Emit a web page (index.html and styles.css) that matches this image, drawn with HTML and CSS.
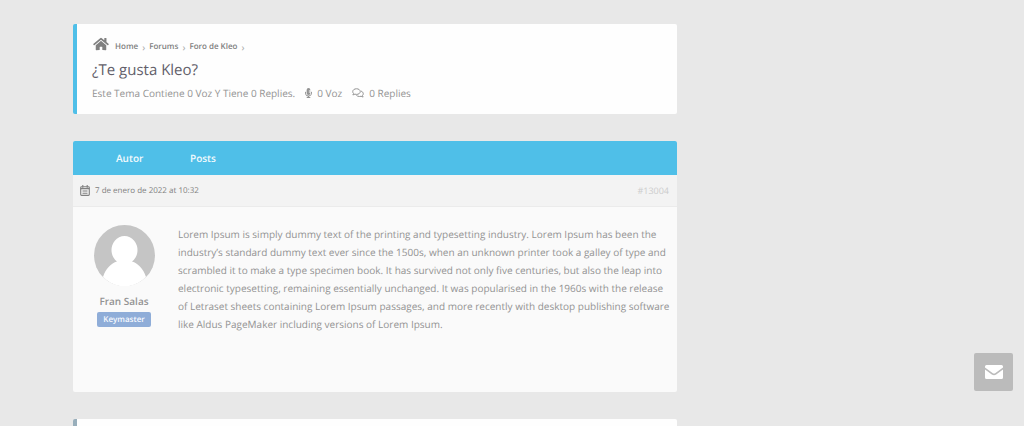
FILE: index.html
```html
<!DOCTYPE html>
<html lang="es">
<head>
<meta charset="utf-8">
<meta name="viewport" content="width=device-width, initial-scale=1">
<title>¿Te gusta Kleo?</title>
<link rel="stylesheet" href="styles.css">
</head>
<body>
<div class="page">
  <main class="content">
    <header class="card topic-header">
      <nav class="breadcrumb" aria-label="Breadcrumb">
        <svg class="home-icon" viewBox="0 0 576 512" aria-hidden="true"><path d="M280.400 148.300L96 300.100V464a16 16 0 0 0 16 16l112-.3a16 16 0 0 0 16-16V368a16 16 0 0 1 16-16h64a16 16 0 0 1 16 16v95.600a16 16 0 0 0 16 16.100L464 480a16 16 0 0 0 16-16V300L295.700 148.300a12.200 12.200 0 0 0-15.300 0zM571.600 251.500L488 182.600V44a12 12 0 0 0-12-12h-56a12 12 0 0 0-12 12v72.600L318.500 43a48 48 0 0 0-61 0L4.300 251.500a12 12 0 0 0-1.600 16.900l25.500 31a12 12 0 0 0 16.900 1.600l235.200-193.700a12.200 12.200 0 0 1 15.300 0L530.900 301a12 12 0 0 0 16.900-1.600l25.500-31a12 12 0 0 0-1.700-16.900z"/></svg>
        <a href="#">Home</a><span class="sep">›</span>
        <a href="#">Forums</a><span class="sep">›</span>
        <a href="#">Foro de Kleo</a><span class="sep">›</span>
      </nav>
      <h1 class="title">¿Te gusta Kleo?</h1>
      <p class="meta">
        <span>Este Tema Contiene 0 Voz Y Tiene 0 Replies.</span>
        <span class="stat">
          <svg class="mic-icon" viewBox="0 0 352 512" aria-hidden="true"><path d="M176 352a96 96 0 0 0 96-96h-80v-32h80v-32h-80v-32h80v-32h-80V96h80a96 96 0 0 0-192 0v160a96 96 0 0 0 96 96zM336 192h-16a16 16 0 0 0-16 16v48a128 128 0 0 1-256 0v-48a16 16 0 0 0-16-16H16a16 16 0 0 0-16 16v42c0 90 64 170 152 182v32H96a16 16 0 0 0-16 16v16a16 16 0 0 0 16 16h160a16 16 0 0 0 16-16v-16a16 16 0 0 0-16-16h-56v-32c86-12 152-86 152-176v-48a16 16 0 0 0-16-16z"/></svg>
          0 Voz
        </span>
        <span class="stat">
          <svg class="chat-icon" viewBox="0 0 24 20" aria-hidden="true"><path d="M9 1.500c4.300 0 7.500 2.500 7.500 5.700s-3.200 5.600-7.500 5.600c-1.200 0-2.300-.2-3.200-.5-1.100.8-2.500 1.400-4.200 1.400.8-.8 1.300-1.800 1.500-2.700-1-1-1.600-2.300-1.600-3.800C1.500 4 4.700 1.500 9 1.500z"/><path d="M18 6.200c2.700.8 4.500 2.800 4.500 5.200 0 1.500-.6 2.800-1.600 3.800.2.900.7 1.900 1.500 2.700-1.700 0-3.100-.6-4.200-1.400-.9.300-2 .5-3.200.5-2.700 0-5-1-6.300-2.500"/></svg>
          0 Replies
        </span>
      </p>
    </header>

    <section class="thread">
      <div class="thread-head">
        <span class="col-author">Autor</span>
        <span class="col-posts">Posts</span>
      </div>
      <div class="post-bar">
        <svg class="calendar-icon" viewBox="0 0 18 20" aria-hidden="true"><rect x="1.200" y="3.200" width="15.600" height="15.600" rx="1.500"/><path d="M5 0v5M13 0v5M1 6.500h16M4.500 11h9M4.500 15h9"/></svg>
        <time class="date" datetime="2022-01-07T10:32">7 de enero de 2022 at 10:32</time>
        <a class="permalink" href="#">#13004</a>
      </div>
      <article class="post">
        <div class="author">
          <svg class="avatar" viewBox="0 0 61 61" aria-hidden="true"><circle class="avatar-bg" cx="30.500" cy="30.500" r="30.500"/><path class="avatar-person" d="M9 52C12 43 17 38.500 23 36.500A13 14 0 1 1 38 36.500C44 38.500 49 43 52 52Q43 61 30.500 61.500Q18 61 9 52z"/></svg>
          <a class="author-name" href="#">Fran Salas</a>
          <span class="role">Keymaster</span>
        </div>
        <p class="post-text">Lorem Ipsum is simply dummy text of the printing and typesetting industry. Lorem Ipsum has been the industry’s standard dummy text ever since the 1500s, when an unknown printer took a galley of type and scrambled it to make a type specimen book. It has survived not only five centuries, but also the leap into electronic typesetting, remaining essentially unchanged. It was popularised in the 1960s with the release of Letraset sheets containing Lorem Ipsum passages, and more recently with desktop publishing software like Aldus PageMaker including versions of Lorem Ipsum.</p>
      </article>
    </section>

    <section class="card next-card"></section>
  </main>
</div>
<button class="contact" type="button" aria-label="Contact">
  <svg class="mail-icon" viewBox="0 0 18 14" aria-hidden="true"><path d="M1.500 0h15A1.500 1.500 0 0 1 18 1.500v1L10.500 8Q9 9 7.500 8L0 2.500v-1A1.500 1.500 0 0 1 1.500 0zM0 4.500L6.800 9.400Q9 10.900 11.200 9.400L18 4.500v8a1.500 1.500 0 0 1-1.500 1.500h-15A1.500 1.500 0 0 1 0 12.500z"/></svg>
</button>
</body>
</html>
```

FILE: styles.css
```css
* {
  box-sizing: border-box;
}

body {
  margin: 0;
  background: #e8e8e8;
  color: #939393;
  font-family: "Open Sans", "Noto Sans", sans-serif;
  font-size: 10px;
  line-height: 18px;
  text-rendering: geometricPrecision;
}

a {
  color: inherit;
  text-decoration: none;
}

svg {
  flex: none;
  fill: currentColor;
}

.page {
  display: grid;
  grid-template-columns: minmax(0, 1fr) 274px;
  padding: 24px 73px 0;
}

.content {
  display: flex;
  flex-direction: column;
  gap: 27px;
}

.card {
  background: #fefefe;
  border-left: 4px solid #4fbfe8;
  border-radius: 2px;
}

.topic-header {
  padding: 12px 15px 12px;
}

.breadcrumb {
  display: flex;
  align-items: flex-end;
  height: 20px;
  font-size: 8px;
  font-weight: 600;
  color: #808080;
}

.home-icon {
  width: 16px;
  height: 14px;
  margin: 0 6px 5px 1px;
}

.sep {
  margin: 0 4px;
  font-size: 10px;
  font-weight: 400;
  color: #aaa;
}

.title {
  margin: 0;
  font-size: 15px;
  font-weight: 400;
  line-height: 28px;
  color: #62606a;
}

.meta {
  display: flex;
  gap: 10px;
  margin: 0;
}

.stat {
  display: flex;
  align-items: center;
  gap: 5px;
}

.mic-icon {
  width: 7px;
  height: 10px;
}

.chat-icon {
  width: 12px;
  height: 10px;
  fill: none;
  stroke: currentColor;
  stroke-width: 2;
}

.thread {
  border-radius: 2px;
  background: #fafafa;
}

.thread-head {
  display: flex;
  align-items: center;
  height: 34px;
  background: #4fbfe8;
  border-radius: 2px 2px 0 0;
  color: #f2fafd;
  font-weight: 600;
}

.col-author {
  width: 117px;
  padding-left: 43px;
}

.post-bar {
  display: flex;
  align-items: center;
  height: 32px;
  padding: 0 8px 0 7px;
  background: #f3f3f3;
  border-bottom: 1px solid #ebebeb;
  font-size: 9px;
  color: #808080;
}

.date {
  font-size: 8px;
}

.calendar-icon {
  width: 10px;
  height: 11px;
  margin-right: 5px;
  fill: none;
  stroke: currentColor;
  stroke-width: 2;
}

.permalink {
  margin-left: auto;
  color: #ccc;
}

.post {
  display: flex;
  gap: 20px;
  min-height: 185px;
  padding: 18px 6px 18px 17px;
}

.author {
  display: flex;
  flex: none;
  flex-direction: column;
  align-items: center;
  width: 68px;
}

.avatar {
  width: 61px;
  height: 61px;
}

.avatar-bg {
  fill: #c5c5c5;
}

.avatar-person {
  fill: #fff;
}

.author-name {
  margin-top: 6px;
  font-weight: 600;
}

.role {
  margin-top: 2px;
  padding: 0 6px;
  border-radius: 2px;
  background: #8fadd8;
  color: #f7faff;
  font-size: 8px;
  font-weight: 600;
  line-height: 15px;
}

.post-text {
  margin: 0;
}

.next-card {
  height: 8px;
  border-left-color: #98aebb;
  border-radius: 2px 2px 0 0;
}

.contact {
  position: fixed;
  right: 11px;
  bottom: 35px;
  display: grid;
  place-items: center;
  width: 39px;
  height: 38px;
  padding: 0;
  border: 0;
  border-radius: 2px;
  background: #bbb;
  color: #fff;
}

.mail-icon {
  width: 18px;
  height: 14px;
}
```
